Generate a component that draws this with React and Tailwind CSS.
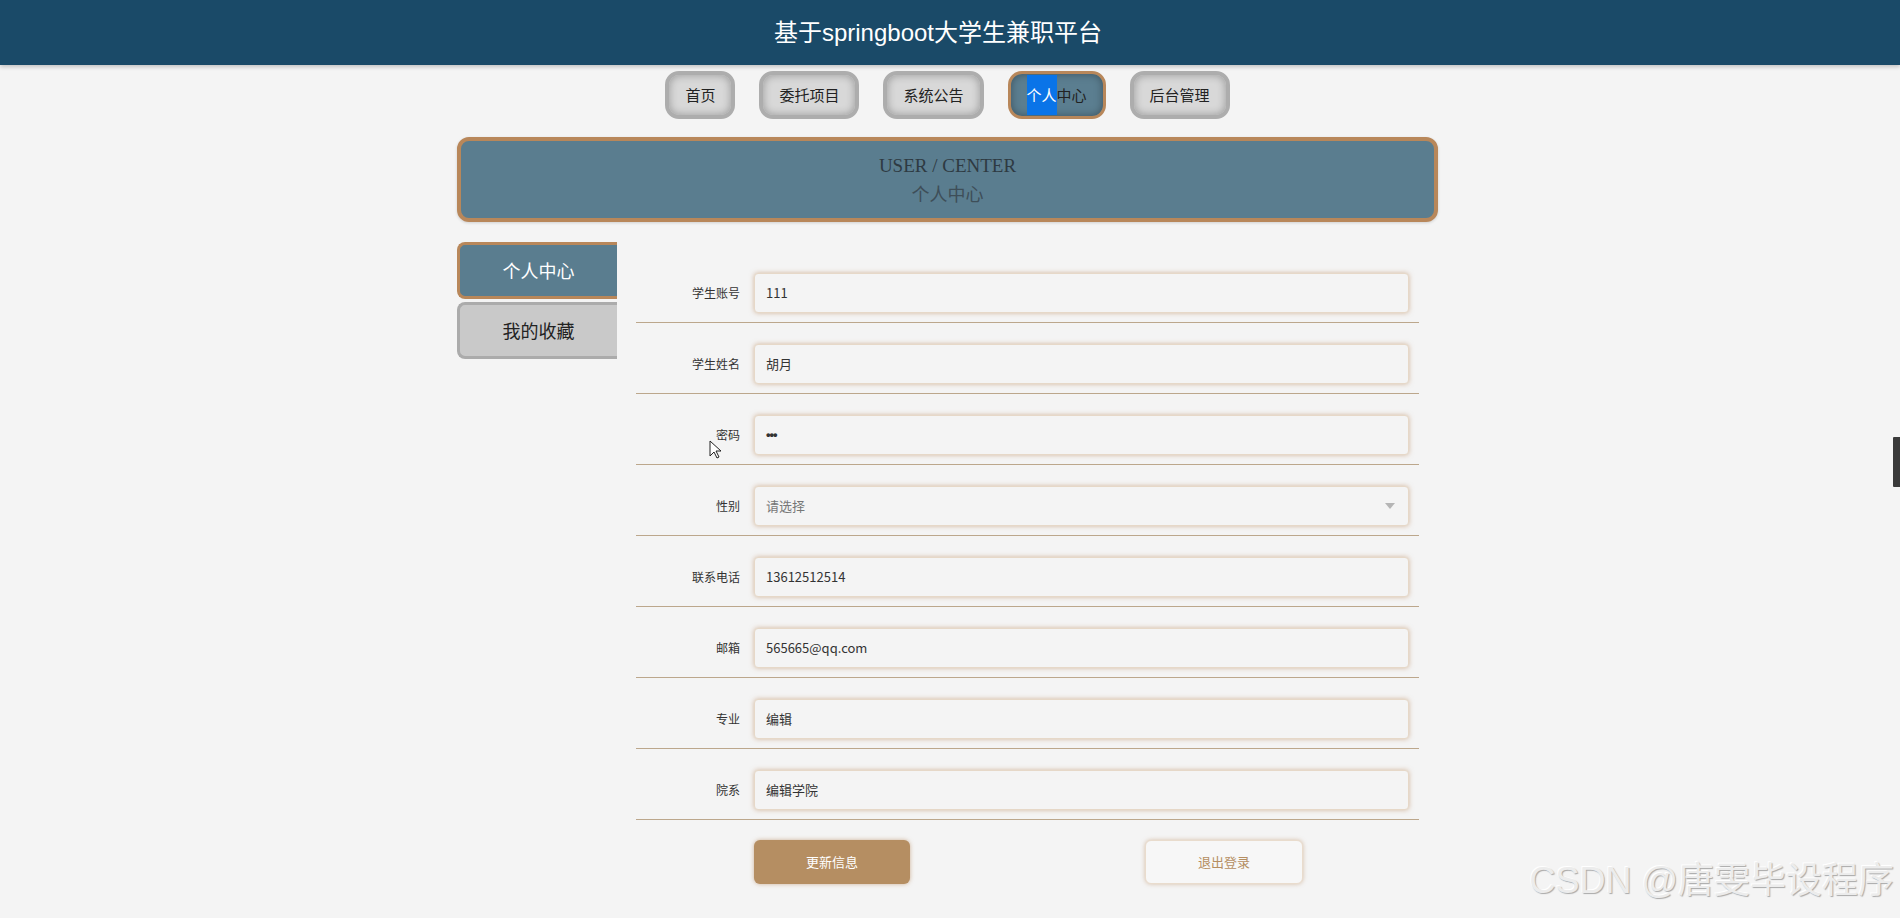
import React from 'react';

const navItems = ['首页', '委托项目', '系统公告', '个人中心', '后台管理'];

const fields = [
  { label: '学生账号', value: '111' },
  { label: '学生姓名', value: '胡月' },
  { label: '密码', value: '•••', password: true },
  { label: '性别', value: '请选择', select: true },
  { label: '联系电话', value: '13612512514' },
  { label: '邮箱', value: '565665@qq.com' },
  { label: '专业', value: '编辑' },
  { label: '院系', value: '编辑学院' },
];

function NavButton({ label, active }) {
  if (active) {
    return (
      <div className="h-[48px] px-[16px] flex items-center rounded-[14px] border-[3px] border-[#b8875a] bg-[#5b7e90] shadow-[inset_0_0_8px_rgba(0,0,0,0.35)] text-[15px] text-[#222]">
        <span className="bg-[#0a74e8] text-white h-[40px] flex items-center">个人</span>
        <span>中心</span>
      </div>
    );
  }
  return (
    <div className="h-[48px] px-[16px] flex items-center rounded-[14px] border-4 border-[#adadad] bg-[#d8d8d8] shadow-[inset_0_0_8px_rgba(0,0,0,0.3)] text-[15px] text-[#222]">
      {label}
    </div>
  );
}

function FormRow({ field }) {
  let valueClass = 'text-[#333]';
  if (field.select) valueClass = 'text-[#777] flex-1';
  if (field.password) valueClass = "text-[#333] font-bold font-['Liberation_Sans',sans-serif] tracking-[-1px]";
  return (
    <div className="flex items-start h-[71px] border-b border-[#bca78c] pt-[21px]">
      <div className="w-[118px] pr-[14px] text-right text-[12px] text-[#333] leading-[40px]">{field.label}</div>
      <div className="flex-1 mr-[10px] h-[40px] rounded-[4px] border border-[#e6d8c8] bg-[#f4f4f4] shadow-[0_0_5px_rgba(184,135,90,0.55)] flex items-center px-[11px] text-[13px]">
        <span className={valueClass}>{field.value}</span>
        {field.select && (
          <svg width="12" height="8" viewBox="0 0 12 8" className="mr-[1px]">
            <path d="M1 1h10L6 7z" fill="#b5b5b5" />
          </svg>
        )}
      </div>
    </div>
  );
}

export default function App() {
  return (
    <div className="relative min-h-[918px] overflow-hidden bg-[#f4f4f4] font-['Noto_Sans_CJK_SC','Noto_Sans',sans-serif]">
      {/* header */}
      <div className="h-[65px] bg-[#1a4a68] flex items-center justify-center pr-[24px] shadow-[0_2px_4px_rgba(0,0,0,0.2)]">
        <h1 className="text-white text-[24px] font-['Liberation_Sans','Noto_Sans_CJK_SC',sans-serif]">基于springboot大学生兼职平台</h1>
      </div>

      {/* nav */}
      <div className="flex justify-center gap-[24px] mt-[6px] pr-[5px]">
        {navItems.map((item) => (
          <NavButton key={item} label={item} active={item === '个人中心'} />
        ))}
      </div>

      <div className="flex justify-center pr-[5px] mt-[18px]">
        <div className="w-[981px]">
          {/* banner */}
          <div className="h-[85px] rounded-[12px] border-4 border-[#b8875a] bg-[#5a7d8f] flex flex-col items-center justify-center shadow-[0_1px_3px_rgba(0,0,0,0.15)]">
            <div className="text-[19px] leading-[26px] text-[#2e3a42] font-['Liberation_Serif',serif]">USER / CENTER</div>
            <div className="text-[18px] leading-[28px] text-[#3e4e58]">个人中心</div>
          </div>

          <div className="flex mt-[20px]">
            {/* sidebar */}
            <div className="w-[160px] flex flex-col gap-[3px]">
              <div className="h-[57px] flex items-center justify-center rounded-l-[8px] border-[3px] border-r-0 border-[#b8875a] bg-[#5a7d8f] text-white text-[18px]">
                个人中心
              </div>
              <div className="h-[57px] flex items-center justify-center rounded-l-[8px] border-[3px] border-r-0 border-[#ababab] bg-[#c9c9c9] text-[#222] text-[18px]">
                我的收藏
              </div>
            </div>

            {/* form */}
            <div className="ml-[19px] w-[783px] mt-[10px]">
              {fields.map((f) => (
                <FormRow key={f.label} field={f} />
              ))}
              <div className="flex pt-[20px] pl-[118px] gap-[235px]">
                <button className="w-[156px] h-[44px] rounded-[6px] bg-[#b58e62] text-white text-[13px] shadow-[0_0_4px_rgba(184,135,90,0.6)]">
                  更新信息
                </button>
                <button className="w-[158px] h-[44px] rounded-[6px] bg-[#f7f7f7] border border-[#e9dccd] text-[#b58e62] text-[13px] shadow-[0_0_4px_rgba(184,135,90,0.5)]">
                  退出登录
                </button>
              </div>
            </div>
          </div>
        </div>
      </div>

      {/* cursor */}
      <svg className="absolute left-[709px] top-[440px]" width="13" height="20" viewBox="0 0 13 20">
        <path d="M1 1v15l4-4 3 6 2-1-3-6h5z" fill="#fff" stroke="#222" strokeWidth="1" strokeLinejoin="round" />
      </svg>

      {/* scroll handle */}
      <div className="absolute right-0 top-[437px] w-[7px] h-[50px] bg-[#3a3a3a] rounded-l-[1px]" />

      {/* watermark */}
      <div className="absolute right-[6px] bottom-[10px] text-[36px] text-[#ececec] [text-shadow:1px_1px_1px_#a9a9a9,-1px_-1px_0_#ffffff] font-['Liberation_Sans','Noto_Sans_CJK_SC',sans-serif]">
        CSDN @唐雯毕设程序
      </div>
    </div>
  );
}
